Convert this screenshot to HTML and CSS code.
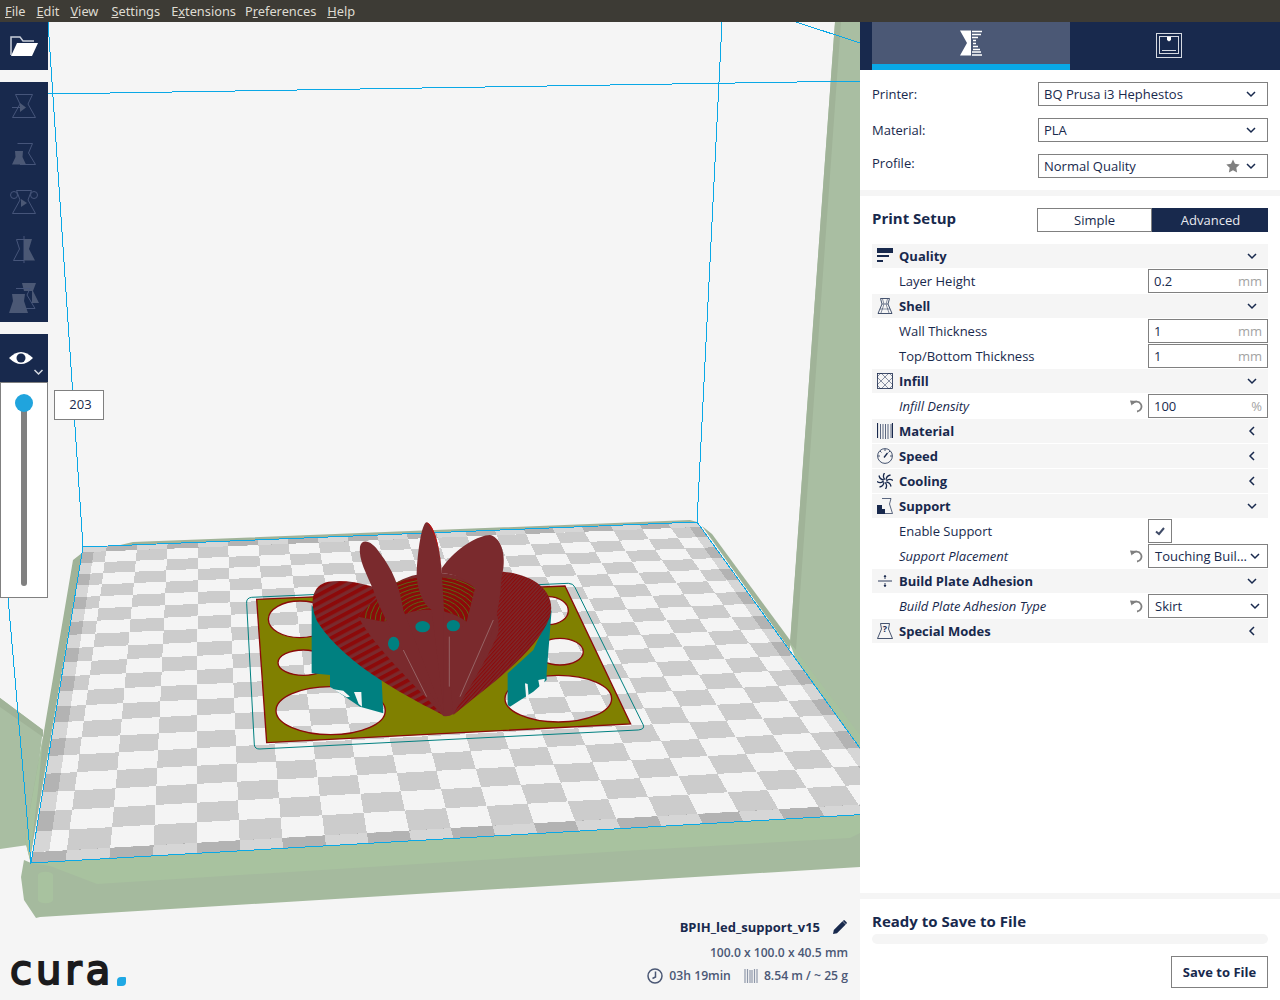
FILE: index.html
```html
<!DOCTYPE html>
<html lang="en">
<head>
    <meta charset="UTF-8">
    <title>Cura</title>
    <link rel="stylesheet" href="styles.css">
</head>
<body>
    <svg class="defs" width="0" height="0">
        <symbol id="chev-down" viewBox="0 0 10 10"><path d="M1 3l4 4 4-4" fill="none" stroke="currentColor" stroke-width="1.5"/></symbol>
        <symbol id="chev-left" viewBox="0 0 10 10"><path d="M7 1L3 5l4 4" fill="none" stroke="currentColor" stroke-width="1.5"/></symbol>
        <symbol id="reset" viewBox="0 0 14 14"><path d="M3.500 4.500A5 5 0 1 1 8 12.500" fill="none" stroke="currentColor" stroke-width="1.800"/><path d="M1 1.500l6 .5-4.500 4.500z" fill="currentColor"/></symbol>
    </svg>

    <div class="menubar">
        <span><u>F</u>ile</span>
        <span><u>E</u>dit</span>
        <span class="menu-view"><u>V</u>iew</span>
        <span><u>S</u>ettings</span>
        <span class="menu-ext">E<u>x</u>tensions</span>
        <span>P<u>r</u>eferences</span>
        <span><u>H</u>elp</span>
    </div>

    <div class="app">
        <!-- viewport with the build plate -->
        <div class="viewport">
            <svg class="scene" viewBox="0 22 860 978" width="860" height="978">
                <defs>
                    <pattern id="stripe-left" width="22" height="22" patternUnits="userSpaceOnUse" patternTransform="rotate(-28)">
                        <rect width="22" height="22" fill="#7a2a2d"/>
                        <rect width="22" height="12" fill="#8c0a0a"/>
                    </pattern>
                    <pattern id="stripe-right" width="8" height="8" patternUnits="userSpaceOnUse" patternTransform="rotate(-48)">
                        <rect width="8" height="8" fill="#7a2a2d"/>
                        <rect width="8" height="3.500" fill="#8c0a0a"/>
                    </pattern>
                    <clipPath id="bowl-clip">
                        <path d="M445 232C480 195 660 185 705 235C720 270 700 320 680 335C620 290 530 290 480 320C465 295 450 260 445 232Z"/>
                        <path d="M355 320C385 285 420 260 450 235L480 320L430 335Z"/>
                    </clipPath>
                </defs>

                <!-- machine body behind the plate -->
                <polygon points="835,22 860,22 860,748 790,645" fill="#a9bea2"/>
                <polygon points="835,22 841,22 796,650 790,643" fill="#a0b398"/>
                <polygon points="790,643 860,735 860,748 796,660" fill="#a8c29f"/>
                <polygon points="702,526 712,534 790,640 790,650" fill="#a0b398"/>
                <polygon points="0,698 43,730 28,845 0,849" fill="#a9bea2"/>
                <polygon points="0,698 43,730 43,737 0,707" fill="#a0b398"/>
                <polygon points="83,547 82,553 73,560 43,737 28,820 25,840 30,860" fill="#a0b398"/>
                <polygon points="43,737 28,820 25,840 30,860 38,790" fill="#a8c29f"/>
                <polygon points="116,546 133,542 690,520 697,522 83,547" fill="#a0b398"/>
                <polygon points="31,863 860,815 860,867 40,917 36,918 24,900 21,877 24,860" fill="#a5ba9e"/>
                <polygon points="31,863 860,815 860,833 850,838 640,850 97,884 50,866" fill="#a8c29f"/>
                <path d="M38 875a7 3 0 0 1 15 0v25a7 3 0 0 1-15 0z" fill="#a8c29f"/>

                <!-- checker squares come from scene.js -->
                <g id="checker" shape-rendering="crispEdges"></g>

                <g class="wire" shape-rendering="crispEdges">
                    <line x1="48" y1="22" x2="83" y2="547"/>
                    <line x1="722" y1="22" x2="697" y2="522"/>
                    <line x1="48" y1="94" x2="860" y2="81"/>
                    <line x1="796" y1="22" x2="860" y2="43"/>
                    <line x1="0" y1="505" x2="31" y2="863"/>
                    <polygon points="83,547 697,522 906,812 31,863"/>
                </g>

                <!-- sliced model, coordinates in 3x units -->
                <g transform="matrix(.3333 0 0 .3333 240 510)">
                    <path class="skirt" d="M35 262L985 220Q1000 220 1005 232L1210 645Q1215 658 1195 660L60 717Q45 718 43 705L20 280Q18 264 35 262Z"/>
                    <path class="brim" fill-rule="evenodd" d="M50 268L975 228L1172 642L80 698Z
                        M85 328a95 55 0 1 0 190 0a95 55 0 1 0-190 0Z
                        M114 458a76 38 0 1 0 152 0a76 38 0 1 0-152 0Z
                        M108 602a164 72 0 1 0 328 0a164 72 0 1 0-328 0Z
                        M795 566a160 70 0 1 0 320 0a160 70 0 1 0-320 0Z
                        M890 425a70 40 0 1 0 140 0a70 40 0 1 0-140 0Z
                        M865 302a60 42 0 1 0 120 0a60 42 0 1 0-120 0Z"/>
                    <path class="support" d="M215 285V490L270 495V530L285 540L360 590L430 610L425 510L300 400Z"/>
                    <path class="support" d="M935 300L920 490V510L880 545L810 590L803 585V490L880 420Z"/>
                    <path fill="#f5f5f5" d="M280 538l30 4 20 18-10 2zM342 546h22l2 44-10-8zM855 520l8 2 4 48-8 0zM895 510l20-4-4 20-12 6z"/>
                    <path fill="url(#stripe-left)" d="M615 618C520 570 320 470 235 340C205 280 215 225 265 215C330 205 420 230 480 265L610 500Z"/>
                    <path fill="url(#stripe-right)" d="M640 615C730 540 890 430 930 320C950 250 890 195 790 185C740 185 690 220 660 260Z"/>
                    <path fill="#7a2a2d" d="M610 618C540 540 400 410 355 320C410 250 480 195 560 190C640 185 700 205 735 250C770 290 780 330 775 370C740 450 680 550 640 612Q625 622 610 618Z"/>
                    <g clip-path="url(#bowl-clip)">
                        <rect x="340" y="180" width="390" height="170" fill="#8c0a0a"/>
                        <g fill="none" stroke="#4f7a18" stroke-width="2.500">
                            <ellipse cx="570" cy="335" rx="60" ry="42"/>
                            <ellipse cx="570" cy="335" rx="75" ry="52"/>
                            <ellipse cx="570" cy="335" rx="90" ry="63"/>
                            <ellipse cx="570" cy="335" rx="105" ry="74"/>
                            <ellipse cx="570" cy="335" rx="120" ry="84"/>
                            <ellipse cx="570" cy="335" rx="135" ry="95"/>
                            <ellipse cx="570" cy="335" rx="150" ry="105"/>
                            <ellipse cx="570" cy="335" rx="165" ry="116"/>
                            <ellipse cx="570" cy="335" rx="180" ry="126"/>
                            <ellipse cx="570" cy="335" rx="195" ry="137"/>
                        </g>
                    </g>
                    <path fill="#7a2a2d" d="M605 175C650 110 720 75 750 75C790 85 800 150 785 200C780 280 770 340 720 470L640 612L620 400L680 335L705 235C670 200 630 190 605 190Z"/>
                    <path fill="#7a2a2d" d="M360 110C365 85 395 90 420 130C455 175 480 230 490 300L610 610C540 500 430 340 400 240C380 190 355 150 360 110Z"/>
                    <path fill="#7a2a2d" d="M530 190C535 100 548 38 560 37C585 45 600 120 605 180L612 300V605L575 300C545 280 530 230 530 190Z"/>
                    <path fill="#c01010" d="M560 37C585 45 600 120 605 180L598 130C590 90 575 50 560 37Z"/>
                    <ellipse class="support" cx="548" cy="350" rx="22" ry="17"/>
                    <ellipse class="support" cx="640" cy="347" rx="20" ry="17"/>
                    <ellipse class="support" cx="461" cy="401" rx="17" ry="21"/>
                    <path d="M490 420L560 560M628 380V530M760 330L660 560" stroke="#a58080" stroke-width="2" fill="none"/>
                </g>
            </svg>

            <div class="tool-button open-button">
                <svg width="48" height="48" viewBox="0 0 48 48">
                    <path d="M11 33V15h9l3 4h11" fill="none" stroke="#c9cfda" stroke-width="1.500"/>
                    <path d="M17 21H38L32 34H11Z" fill="#fff"/>
                </svg>
            </div>

            <div class="toolbar">
                <div class="tool-button">
                    <svg width="48" height="48" viewBox="0 0 48 48">
                        <path class="tool-line" d="M15.500 12.500H32.500L28 22L35.500 35.500H12.500L20 22Z"/>
                        <path class="tool-line" d="M12 25.500H22"/>
                        <path class="tool-fill" d="M20 21l6 4.500-6 4.500z"/>
                    </svg>
                </div>
                <div class="tool-button">
                    <svg width="48" height="48" viewBox="0 0 48 48">
                        <path class="tool-line" d="M17.500 13.500H32.500L28.500 23L35.500 34.500H20"/>
                        <path class="tool-fill" d="M15 21H23L22.500 27L26 34.500H12L15.500 27Z"/>
                    </svg>
                </div>
                <div class="tool-button">
                    <svg width="48" height="48" viewBox="0 0 48 48">
                        <path class="tool-line" d="M16.500 12.500H31.500L28 22L35.500 35.500H12.500L20 22Z"/>
                        <circle class="tool-line" cx="14" cy="17" r="3.500"/>
                        <circle class="tool-line" cx="34" cy="17" r="3.500"/>
                        <path class="tool-fill" d="M21 21l6 4-6 4z"/>
                    </svg>
                </div>
                <div class="tool-button">
                    <svg width="48" height="48" viewBox="0 0 48 48">
                        <path class="tool-line" d="M24 10V37M24 13.500H16.500L19.500 23L13.500 34.500H24"/>
                        <path class="tool-fill" d="M24 13H32L29 23L35 34.500H24Z"/>
                    </svg>
                </div>
                <div class="tool-button">
                    <svg width="48" height="48" viewBox="0 0 48 48">
                        <path class="tool-fill" d="M22 9H36L33 17L39 29H32V17H24Z"/>
                        <path class="tool-line" d="M16 14.500H30L27 21L35 34.500H24"/>
                        <path class="tool-fill" d="M12 20H25L24 27L28 39H9L13 27Z"/>
                    </svg>
                </div>
            </div>

            <div class="tool-button view-button">
                <svg width="48" height="48" viewBox="0 0 48 48">
                    <path d="M9 24Q21 12 33 24Q21 36 9 24Z" fill="#fff"/>
                    <circle cx="21" cy="24" r="4.500" fill="#18294d"/>
                    <path d="M34.500 36l4 4 4-4" fill="none" stroke="#d5d9e1" stroke-width="1.500"/>
                </svg>
            </div>
            <div class="layer-slider">
                <div class="layer-track"></div>
                <div class="layer-handle"></div>
            </div>
            <div class="layer-value">203</div>

            <div class="logo"><span class="logo-word">cura</span><span class="logo-dot"></span></div>

            <div class="job-spec">
                <div class="job-name">
                    <span>BPIH_led_support_v15</span>
                    <svg width="16" height="16" viewBox="0 0 16 16"><path d="M1 15l.8-4L10.500 2.300l3.200 3.200L5 14.200zM11.400 1.400a1 1 0 0 1 1.400 0l1.800 1.800a1 1 0 0 1 0 1.400l-.6.600-3.200-3.200z" fill="#18294d"/></svg>
                </div>
                <div class="job-size">100.0 x 100.0 x 40.5 mm</div>
                <div class="job-stats">
                    <svg width="16" height="16" viewBox="0 0 16 16"><circle cx="8" cy="8" r="7" fill="none" stroke="#4b5875" stroke-width="1.500"/><path d="M8.500 3.500V9L5.500 10.500" fill="none" stroke="#4b5875" stroke-width="1.500"/></svg>
                    <span class="job-time">03h 19min</span>
                    <svg width="14" height="16" viewBox="0 0 14 16"><path d="M1 1v14M3.500 1v14M6 2v13M8 2v13M10.500 1v14M13 1v14" fill="none" stroke="#8f98aa" stroke-width="1.200"/></svg>
                    <span>8.54 m / ~ 25 g</span>
                </div>
            </div>
        </div>

        <!-- right sidebar -->
        <div class="sidebar">
            <div class="tabs">
                <div class="tab tab-active">
                    <svg width="24" height="26" viewBox="0 0 24 26">
                        <path d="M1 0.500H12V25.500H1L8 13Z" fill="#fff"/>
                        <path d="M13 1.500H23M13 4.500H22M13 7.500H19M14 10.500H17M14 13.500H17M14 16.500H19M14 19.500H21M13 22H22M13 25H23" stroke="#fff" stroke-width="1.600" fill="none"/>
                    </svg>
                </div>
                <div class="tab">
                    <svg width="26" height="26" viewBox="0 0 26 26" fill="none" stroke="#d5d9e1">
                        <rect x="0.500" y="0.500" width="25" height="24"/>
                        <rect x="3.500" y="3.500" width="19" height="17"/>
                        <path d="M6 17.500H20"/>
                        <path d="M11 4h4v3l-2 1.500L11 7z" fill="#fff" stroke="none"/>
                    </svg>
                </div>
            </div>

            <div class="machine-block">
                <div class="machine-row">
                    <span>Printer:</span>
                    <div class="combo"><span class="combo-text">BQ Prusa i3 Hephestos</span><svg class="chev"><use href="#chev-down"/></svg></div>
                </div>
                <div class="machine-row">
                    <span>Material:</span>
                    <div class="combo"><span class="combo-text">PLA</span><svg class="chev"><use href="#chev-down"/></svg></div>
                </div>
                <div class="machine-row">
                    <span class="profile-label">Profile:</span>
                    <div class="combo">
                        <span class="combo-text">Normal Quality</span>
                        <svg class="star" width="14" height="14" viewBox="0 0 14 14"><path d="M7 .5l2 4.300 4.700.6-3.400 3.300.8 4.700L7 11.200l-4.100 2.200.8-4.700L.3 5.400 5 4.800z" fill="#808080"/></svg>
                        <svg class="chev"><use href="#chev-down"/></svg>
                    </div>
                </div>
            </div>

            <div class="separator"></div>

            <div class="setup-head">
                <h2>Print Setup</h2>
                <div class="mode-toggle">
                    <div class="mode">Simple</div>
                    <div class="mode mode-active">Advanced</div>
                </div>
            </div>

            <div class="settings">
                <div class="category">
                    <svg class="cat-icon" viewBox="0 0 16 16"><path d="M0 0H16V5H0z" fill="currentColor"/><path d="M0 8H12M0 13H6" stroke="currentColor" stroke-width="2"/></svg>
                    <span>Quality</span><svg class="chev"><use href="#chev-down"/></svg>
                </div>
                <div class="setting">
                    <span class="setting-label">Layer Height</span>
                    <div class="field"><span>0.2</span><span class="unit">mm</span></div>
                </div>

                <div class="category">
                    <svg class="cat-icon" viewBox="0 0 16 16" fill="none" stroke="currentColor" stroke-width=".8"><path d="M3.500 .5H12.500L11 6L15 15.500H1L5 6Z"/><path d="M5.500 1L7 6L4 15M10.500 1L9 6L12 15M5 6H11M3 11H13" stroke-width=".5"/></svg>
                    <span>Shell</span><svg class="chev"><use href="#chev-down"/></svg>
                </div>
                <div class="setting">
                    <span class="setting-label">Wall Thickness</span>
                    <div class="field"><span>1</span><span class="unit">mm</span></div>
                </div>
                <div class="setting">
                    <span class="setting-label">Top/Bottom Thickness</span>
                    <div class="field"><span>1</span><span class="unit">mm</span></div>
                </div>

                <div class="category">
                    <svg class="cat-icon" viewBox="0 0 16 16" fill="none" stroke="currentColor" stroke-width=".8"><rect x=".5" y=".5" width="15" height="15"/><path d="M0 4L4 0M0 12L12 0M4 16L16 4M12 16L16 12M0 4L12 16M0 12L4 16M4 0L16 12M12 0L16 4" stroke-width=".5"/></svg>
                    <span>Infill</span><svg class="chev"><use href="#chev-down"/></svg>
                </div>
                <div class="setting">
                    <span class="setting-label setting-changed">Infill Density</span>
                    <svg class="reset"><use href="#reset"/></svg>
                    <div class="field"><span>100</span><span class="unit">%</span></div>
                </div>

                <div class="category">
                    <svg class="cat-icon" viewBox="0 0 16 16" fill="none" stroke="currentColor"><path d="M.5 0V15" stroke-width="1.200"/><path d="M3.500 1V16M6 1V16M8.500 1V16M11 1V16" stroke-width=".7"/><path d="M14 1V15" stroke-width=".7"/><path d="M15.500 0V15" stroke-width="1.200"/></svg>
                    <span>Material</span><svg class="chev"><use href="#chev-left"/></svg>
                </div>
                <div class="category">
                    <svg class="cat-icon" viewBox="0 0 16 16" fill="none" stroke="currentColor"><circle cx="8" cy="8" r="7.400" stroke-width=".8"/><path d="M8 1V3M1 8H3M13 8H15M3 3L4.500 4.500M13 3L11.500 4.500" stroke-width=".8"/><path d="M7 9.500L10.500 5" stroke-width="1.300"/></svg>
                    <span>Speed</span><svg class="chev"><use href="#chev-left"/></svg>
                </div>
                <div class="category">
                    <svg class="cat-icon" viewBox="0 0 16 16" fill="none" stroke="currentColor" stroke-width="1.300"><path d="M8 6.500C6 5 6 2 7.500 0M9.500 8C11 6 14 6 16 7.500M8 9.500C10 11 10 14 8.500 16M6.500 8C5 10 2 10 0 8.500M6.800 6.800C4.500 6.800 2.500 5 2 2.500M9.200 6.800C9.200 4.500 11 2.500 13.500 2M9.200 9.200C11.500 9.200 13.500 11 14 13.500M6.800 9.200C6.800 11.500 5 13.500 2.500 14"/></svg>
                    <span>Cooling</span><svg class="chev"><use href="#chev-left"/></svg>
                </div>
                <div class="category">
                    <svg class="cat-icon" viewBox="0 0 16 16"><path d="M5 .5H14L12.500 6L15.500 15.500H8" fill="none" stroke="currentColor" stroke-width=".7"/><path d="M0 7H5V11H8V16H0Z" fill="currentColor"/></svg>
                    <span>Support</span><svg class="chev"><use href="#chev-down"/></svg>
                </div>
                <div class="setting">
                    <span class="setting-label">Enable Support</span>
                    <div class="check"><svg width="12" height="12" viewBox="0 0 12 12"><path d="M2 6.500L5 9L10 3" fill="none" stroke="#404c68" stroke-width="2"/></svg></div>
                </div>
                <div class="setting">
                    <span class="setting-label setting-changed">Support Placement</span>
                    <svg class="reset"><use href="#reset"/></svg>
                    <div class="field field-select"><span>Touching Buil...</span><svg class="chev"><use href="#chev-down"/></svg></div>
                </div>

                <div class="category">
                    <svg class="cat-icon" viewBox="0 0 16 16" fill="none" stroke="currentColor"><path d="M1 8H15" stroke-width=".9"/><path d="M8 2V6M8 10V14" stroke-width=".9"/><path d="M6.500 4L8 2l1.500 2zM6.500 12L8 14l1.500-2z" fill="currentColor" stroke="none"/></svg>
                    <span>Build Plate Adhesion</span><svg class="chev"><use href="#chev-down"/></svg>
                </div>
                <div class="setting">
                    <span class="setting-label setting-changed">Build Plate Adhesion Type</span>
                    <svg class="reset"><use href="#reset"/></svg>
                    <div class="field field-select"><span>Skirt</span><svg class="chev"><use href="#chev-down"/></svg></div>
                </div>

                <div class="category">
                    <svg class="cat-icon" viewBox="0 0 16 16" fill="none" stroke="currentColor" stroke-width=".8"><path d="M3.500 .5H12.500L11.500 6L15.500 15.500H.5L4.500 6Z"/><text x="8" y="9" text-anchor="middle" font-family="Open Sans" font-weight="700" font-size="9" fill="currentColor" stroke="none">?</text></svg>
                    <span>Special Modes</span><svg class="chev"><use href="#chev-left"/></svg>
                </div>
            </div>

            <div class="sidebar-space"></div>

            <div class="save-block">
                <div class="save-title">Ready to Save to File</div>
                <div class="progress"></div>
                <div class="save-actions"><div class="save-button">Save to File</div></div>
            </div>
        </div>
    </div>

    <script src="scene.js"></script>
</body>
</html>
```

FILE: styles.css
```css
body {
    margin: 0;
    height: 1000px;
    overflow: hidden;
    font-family: "Open Sans", sans-serif;
    font-size: 13px;
    color: #18294d;
    background-color: #f5f5f5;
}

.defs {
    position: absolute;
}

.menubar {
    display: flex;
    gap: 11px;
    height: 22px;
    padding-left: 5px;
    align-items: center;
    background-color: #3d3b35;
    color: #dfdbd2;
    font-family: "Noto Sans", sans-serif;
    font-size: 12.800px;
}

.menu-view {
    margin-right: 2px;
}

.menu-ext {
    margin-right: -2px;
}

.app {
    display: flex;
    height: 978px;
}

/* viewport */
.viewport {
    position: relative;
    flex: 1;
    overflow: hidden;
}

.scene {
    position: absolute;
    top: 0;
    left: 0;
}

.wire line,
.wire polygon {
    stroke: #0aa8e6;
    stroke-width: 1;
    fill: none;
}

.brim {
    fill: #808000;
    stroke: #8b0a0a;
    stroke-width: 4;
}

.support {
    fill: #008080;
}

.skirt {
    fill: none;
    stroke: #008080;
    stroke-width: 3;
}

.tool-button {
    width: 48px;
    height: 48px;
    background-color: #18294d;
}

.tool-button svg {
    display: block;
}

.tool-line {
    fill: none;
    stroke: #46557a;
    stroke-width: 1;
}

.tool-fill {
    fill: #4b5875;
}

.open-button {
    position: absolute;
    top: 0;
    left: 0;
}

.toolbar {
    position: absolute;
    top: 60px;
    left: 0;
}

.view-button {
    position: absolute;
    top: 312px;
    left: 0;
}

.layer-slider {
    position: absolute;
    top: 360px;
    left: 0;
    width: 48px;
    height: 216px;
    box-sizing: border-box;
    background-color: #fff;
    border: 1px solid #808080;
}

.layer-track {
    position: absolute;
    top: 22px;
    left: 20px;
    width: 6px;
    height: 181px;
    border-radius: 3px;
    background-color: #808080;
}

.layer-handle {
    position: absolute;
    top: 11px;
    left: 14px;
    width: 18px;
    height: 18px;
    border-radius: 50%;
    background-color: #20a4dd;
}

.layer-value {
    position: absolute;
    top: 368px;
    left: 54px;
    width: 50px;
    height: 30px;
    box-sizing: border-box;
    padding-left: 3px;
    line-height: 27px;
    text-align: center;
    background-color: #fff;
    border: 1px solid #808080;
}

.logo {
    position: absolute;
    left: 10px;
    top: 924px;
    display: flex;
    align-items: flex-end;
    gap: 3px;
}

.logo-word {
    font-family: "DejaVu Sans", sans-serif;
    font-size: 40px;
    letter-spacing: 4px;
    line-height: 48px;
    color: #1b1b1d;
    -webkit-text-stroke: 2px #1b1b1d;
}

.logo-dot {
    width: 9px;
    height: 9px;
    margin-bottom: 8px;
    border-radius: 4px 1px 4px 1px;
    background-color: #1fa8e4;
}

.job-spec {
    position: absolute;
    right: 12px;
    top: 894px;
    display: flex;
    flex-direction: column;
    align-items: flex-end;
    font-weight: 600;
    color: #4b5875;
}

.job-name {
    display: flex;
    align-items: center;
    gap: 12px;
    height: 22px;
    color: #18294d;
    font-weight: 700;
}

.job-size {
    margin-top: 4px;
    line-height: 22px;
    font-size: 12.100px;
}

.job-stats {
    display: flex;
    align-items: center;
    gap: 6px;
    line-height: 22px;
    margin-top: 1px;
    font-size: 12.200px;
}

.job-time {
    margin-right: 7px;
}

/* sidebar */
.sidebar {
    display: flex;
    flex-direction: column;
    width: 420px;
    background-color: #fff;
}

.tabs {
    display: flex;
    height: 48px;
    padding: 0 12px;
    background-color: #18294d;
}

.tab {
    display: flex;
    flex: 1;
    align-items: center;
    justify-content: center;
}

.tab-active {
    box-sizing: border-box;
    background-color: #4b5875;
    border-bottom: 6px solid #0aa8e6;
}

.machine-block {
    display: flex;
    flex-direction: column;
    gap: 12px;
    padding: 12px;
}

.machine-row {
    display: flex;
    justify-content: space-between;
    align-items: center;
}

.profile-label {
    margin-bottom: 6px;
}

.combo {
    display: flex;
    align-items: center;
    width: 230px;
    height: 24px;
    box-sizing: border-box;
    padding: 0 11px 0 5px;
    border: 1px solid #808080;
}

.combo-text {
    flex: 1;
}

.star {
    margin-right: 6px;
}

.chev {
    width: 10px;
    height: 10px;
    flex: none;
}

.separator {
    height: 6px;
    background-color: #f5f5f5;
}

.setup-head {
    display: flex;
    justify-content: space-between;
    align-items: center;
    padding: 12px;
}

.setup-head h2 {
    margin: 0 0 4px 0;
    font-size: 15px;
    font-weight: 700;
    line-height: 18px;
}

.mode-toggle {
    display: flex;
    width: 231px;
    height: 24px;
}

.mode {
    flex: 1;
    box-sizing: border-box;
    line-height: 22px;
    text-align: center;
    border: 1px solid #808080;
}

.mode-active {
    flex: none;
    width: 116px;
    padding-left: 1px;
    background-color: #18294d;
    border-color: #18294d;
    color: #e8eaf0;
}

.settings {
    display: flex;
    flex-direction: column;
    gap: 1px;
    padding: 0 12px;
}

.category {
    display: flex;
    align-items: center;
    height: 24px;
    padding: 0 11px 0 5px;
    background-color: #f5f5f5;
    font-weight: 700;
}

.category span {
    flex: 1;
}

.cat-icon {
    width: 16px;
    height: 16px;
    margin-right: 6px;
    flex: none;
}

.setting {
    display: flex;
    align-items: center;
    height: 24px;
    padding-left: 27px;
}

.setting-label {
    flex: 1;
}

.setting-changed {
    font-style: italic;
}

.reset {
    width: 14px;
    height: 14px;
    margin-right: 5px;
    color: #808080;
}

.field {
    display: flex;
    justify-content: space-between;
    align-items: center;
    width: 120px;
    height: 24px;
    box-sizing: border-box;
    padding: 0 5px;
    border: 1px solid #808080;
}

.field-select {
    padding: 0 7px 0 6px;
}

.unit {
    color: #a3a3a3;
}

.check {
    display: flex;
    align-items: center;
    justify-content: center;
    width: 24px;
    height: 24px;
    margin-right: 96px;
    box-sizing: border-box;
    border: 1px solid #808080;
}

.sidebar-space {
    flex: 1;
}

.save-block {
    padding: 12px;
    border-top: 6px solid #f5f5f5;
}

.save-title {
    font-size: 15px;
    font-weight: 700;
    line-height: 20px;
}

.progress {
    height: 10px;
    margin-top: 3px;
    border-radius: 5px;
    background-color: #f5f5f5;
}

.save-actions {
    display: flex;
    justify-content: flex-end;
    margin-top: 12px;
}

.save-button {
    width: 97px;
    height: 32px;
    box-sizing: border-box;
    line-height: 30px;
    text-align: center;
    font-weight: 700;
    border: 1px solid #808080;
}
```

FILE: scene.js
```js
// Build plate corners on screen: front left, front right, back right, back left
var corners = [[31, 863], [906, 812], [697, 522], [83, 547]];

function buildMapping(q) {
    var dx1 = q[1][0] - q[2][0], dx2 = q[3][0] - q[2][0], sx = q[0][0] - q[1][0] + q[2][0] - q[3][0];
    var dy1 = q[1][1] - q[2][1], dy2 = q[3][1] - q[2][1], sy = q[0][1] - q[1][1] + q[2][1] - q[3][1];
    var det = dx1 * dy2 - dx2 * dy1;
    var g = (sx * dy2 - dx2 * sy) / det;
    var h = (dx1 * sy - sx * dy1) / det;
    var a = q[1][0] - q[0][0] + g * q[1][0];
    var b = q[3][0] - q[0][0] + h * q[3][0];
    var d = q[1][1] - q[0][1] + g * q[1][1];
    var e = q[3][1] - q[0][1] + h * q[3][1];
    return function (s, t) {
        var w = g * s + h * t + 1;
        return [(a * s + b * t + q[0][0]) / w, (d * s + e * t + q[0][1]) / w];
    };
}

var mapPoint = buildMapping(corners);
var checker = document.getElementById('checker');

function addQuad(s0, t0, s1, t1, fill) {
    var pts = [mapPoint(s0, t0), mapPoint(s1, t0), mapPoint(s1, t1), mapPoint(s0, t1)];
    var el = document.createElementNS('http://www.w3.org/2000/svg', 'polygon');
    el.setAttribute('points', pts.map(function (p) { return p[0].toFixed(1) + ',' + p[1].toFixed(1); }).join(' '));
    el.setAttribute('fill', fill);
    checker.appendChild(el);
}

// cell edges in cell units, the first row and column are cut short
var totalCols = 20.8, totalRows = 21;
var colEdges = [0], rowEdges = [0];
for (var c = 0; c <= 20; c++) colEdges.push(Math.min(0.78 + c, totalCols) / totalCols);
for (var r = 0; r <= 20; r++) rowEdges.push(Math.min(0.5 + r, totalRows) / totalRows);
colEdges.push(1);
rowEdges.push(1);

addQuad(0, 0, 1, 1, '#f4f4f4');
for (var i = 0; i < colEdges.length - 1; i++) {
    for (var j = 0; j < rowEdges.length - 1; j++) {
        if ((i + j) % 2 === 0) addQuad(colEdges[i], rowEdges[j], colEdges[i + 1], rowEdges[j + 1], '#cccccc');
    }
}

// darker band along the plate border
var band = 'rgba(0,0,0,0.12)';
addQuad(0, 0, 1, 0.024, band);
addQuad(0, 0.976, 1, 1, band);
addQuad(0, 0.024, 0.018, 0.976, band);
addQuad(0.982, 0.024, 1, 0.976, band);
```
